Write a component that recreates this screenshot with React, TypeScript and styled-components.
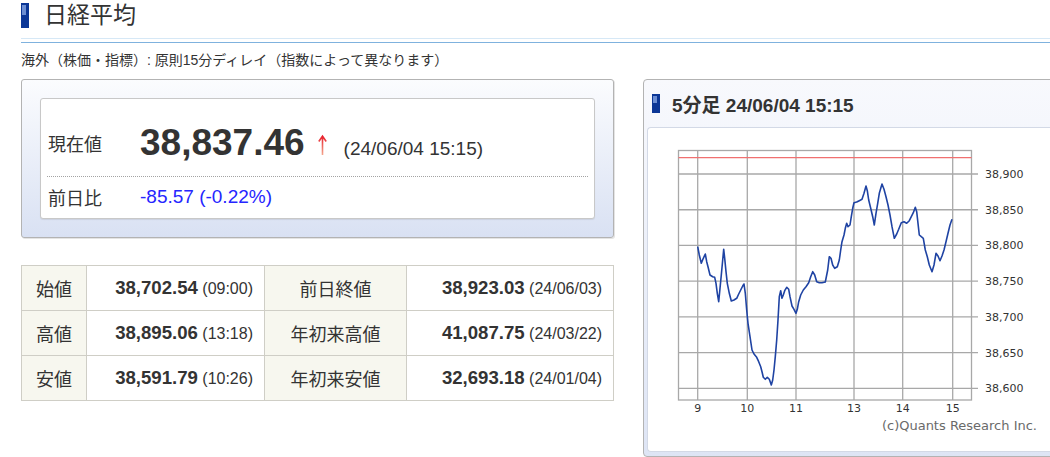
import styled, { createGlobalStyle } from "styled-components";

const GlobalStyle = createGlobalStyle`
  html, body { margin: 0; padding: 0; background: #fff; overflow: hidden; }
  body {
    font-family: "Liberation Sans", "Noto Sans CJK JP", sans-serif;
    color: #333;
  }
`;

const Page = styled.div`
  width: 1050px;
  height: 457px;
  overflow: hidden;
  box-sizing: border-box;
  padding: 3px 0 0 21px;
`;

const TitleRow = styled.div`
  display: flex;
  align-items: center;
  gap: 15px;
  height: 25px;
`;

// blue square marker with the small highlight in its upper-left corner
const Marker = styled.span<{ $h: number; $hl: number }>`
  flex-shrink: 0;
  width: 8px;
  height: ${(p) => p.$h}px;
  background: linear-gradient(#6c8ed3, #6c8ed3) 1px 2px / 4px ${(p) => p.$hl}px no-repeat,
    #0b3696;
`;

const Title = styled.h1`
  margin: 0;
  font-size: 23px;
  font-weight: normal;
  line-height: 25px;
  color: #333;
`;

const Rule = styled.div`
  margin-top: 10px;
  height: 5px;
  box-sizing: border-box;
  border-top: 1px solid #d6e8f6;
  border-bottom: 1px solid #7fb2de;
`;

const Note = styled.p`
  margin: 8px 0 0;
  font-size: 14px;
  line-height: 18px;
  color: #333;
`;

const Main = styled.div`
  display: flex;
  align-items: flex-start;
  gap: 29px;
  margin-top: 10px;
`;

const LeftCol = styled.div`
  flex-shrink: 0;
  width: 593px;
  display: flex;
  flex-direction: column;
  gap: 27px;
`;

const QuoteBox = styled.div`
  height: 159px;
  box-sizing: border-box;
  padding: 18px;
  border: 1px solid #b3b3b3;
  border-radius: 3px;
  background: linear-gradient(#fbfcfe, #d9e1f3);
  box-shadow: 1px 1px 0 #e4e4e4;
`;

const QuoteInner = styled.div`
  height: 100%;
  box-sizing: border-box;
  padding: 0 6px;
  background: #fff;
  border: 1px solid #c8c8c8;
  border-radius: 3px;
  box-shadow: 0 1px 1px rgba(0, 0, 0, 0.08);
`;

const QuoteRow = styled.div<{ $main?: boolean }>`
  display: flex;
  align-items: center;
  box-sizing: border-box;
  height: ${(p) => (p.$main ? 78 : 41)}px;
  padding-top: ${(p) => (p.$main ? 10 : 0)}px;
  padding-bottom: ${(p) => (p.$main ? 0 : 2)}px;
  border-bottom: ${(p) => (p.$main ? "1px dotted #a3a3a3" : "none")};
`;

const RowLabel = styled.span`
  flex-shrink: 0;
  width: 92px;
  padding-left: 1px;
  font-size: 18px;
  color: #333;
`;

const PriceGroup = styled.div`
  display: flex;
  align-items: baseline;
`;

const BigPrice = styled.span`
  font-size: 37px;
  font-weight: bold;
  line-height: 1;
  color: #333;
`;

const Arrow = styled.svg`
  margin: 0 16px -4px 12px;
`;

const Stamp = styled.span`
  font-size: 19px;
  color: #333;
`;

const Change = styled.span`
  font-size: 19px;
  color: #2525ff;
`;

const Stats = styled.table`
  width: 593px;
  border-collapse: collapse;
  table-layout: fixed;
`;

const Col = styled.col<{ $w: number }>`
  width: ${(p) => p.$w}px;
`;

const LabelCell = styled.th`
  height: 44px;
  padding: 0;
  border: 1px solid #cfcec6;
  background: #f7f7ef;
  font-size: 18px;
  font-weight: normal;
  text-align: center;
  color: #333;
`;

const ValueCell = styled.td`
  height: 44px;
  padding: 0 11px 0 0;
  border: 1px solid #cfcec6;
  text-align: right;
  white-space: nowrap;
`;

const Num = styled.b`
  font-size: 18.6px;
  color: #333;
`;

const Time = styled.span`
  font-size: 16px;
  color: #333;
`;

const ChartPanel = styled.section`
  flex-shrink: 0;
  width: 420px;
  height: 378px;
  box-sizing: border-box;
  padding: 0 0 4px 3px;
  border: 1px solid #b3b3b3;
  border-radius: 4px;
  background: linear-gradient(#f8f9fd, #dee5f5);
`;

const ChartHead = styled.div`
  display: flex;
  align-items: center;
  gap: 12px;
  height: 47px;
  padding-left: 5px;
  font-size: 19px;
  font-weight: bold;
  color: #333;
`;

const ChartBody = styled.div`
  height: 325px;
  box-sizing: border-box;
  background: #fff;
  border: 1px solid #d3d9e6;
  border-right: none;
  border-radius: 4px 0 0 4px;
  overflow: hidden;
`;

const Plot = styled.svg`
  display: block;
`;

const stats = [
  ["始値", "38,702.54", "(09:00)", "前日終値", "38,923.03", "(24/06/03)"],
  ["高値", "38,895.06", "(13:18)", "年初来高値", "41,087.75", "(24/03/22)"],
  ["安値", "38,591.79", "(10:26)", "年初来安値", "32,693.18", "(24/01/04)"],
];

// plot geometry, in page pixels (the svg's viewBox starts at the body's corner)
const FRAME = { l: 678.5, r: 971.5, t: 150.5, b: 400 };
const yOf = (v: number) => 174 + (38900 - v) * 0.7145;
const hours = [
  { x: 697.7, t: "9" },
  { x: 747.3, t: "10" },
  { x: 796, t: "11" },
  { x: 854, t: "13" },
  { x: 902.7, t: "14" },
  { x: 952.7, t: "15" },
];
const levels = [38900, 38850, 38800, 38750, 38700, 38650, 38600];

const series: [number, number][] = [
  [697.7, 246.7], [699.3, 255], [701.3, 263.3], [703.3, 258.3], [705.3, 254], [706.7, 261.7],
  [708, 266.7], [710, 275], [712.7, 276.7], [714.7, 277.3], [716, 283.3], [717.3, 293.3],
  [718.7, 301.7], [720, 288.3], [721.3, 275], [722.7, 260], [723.7, 249.3], [724.7, 258.3],
  [726, 271.7], [727.3, 283.3], [729.3, 293.3], [731.3, 301], [734, 300], [736.7, 298.3],
  [738.7, 294], [740.7, 290], [742.7, 286], [744, 284], [745.3, 293.3], [746.7, 310],
  [748, 323.3], [750, 336.7], [752, 350], [754, 354], [756.7, 357.3], [758.7, 361.7],
  [760.7, 366.7], [762, 371.7], [763.3, 377.3], [765.3, 379.3], [767.3, 377.3], [769.3, 379.3],
  [771.3, 385], [772.7, 380], [774, 370], [775.3, 356.7], [776.7, 340], [778, 320],
  [779.3, 296.7], [780.7, 290.7], [782, 298.3], [783.3, 295], [784.7, 290.7], [786.7, 287.3],
  [788.7, 289.3], [790, 296.7], [792, 306], [794, 309.3], [796, 313.3], [797.3, 309.3],
  [798.7, 301.7], [800.7, 295], [803.3, 290], [806, 286.7], [808.7, 282.7], [810.7, 276.7],
  [812.7, 271.7], [814.7, 275], [816.7, 281.7], [819.3, 282.7], [822, 282.7], [825.3, 282],
  [827.7, 270], [829.3, 256.7], [831, 258.3], [832.7, 265], [834.7, 268.3], [837.3, 266.7],
  [839.3, 260], [840.7, 250], [842, 241.7], [844, 235], [845.3, 228.3], [846.7, 223.3],
  [848, 226.7], [850, 225], [851.3, 216.7], [852.7, 208.3], [854, 202.7], [856.7, 202],
  [859.3, 200.7], [862, 199.3], [864, 193.3], [866, 186], [867.3, 190.7], [868.7, 200],
  [870.7, 208.3], [872.7, 216.7], [874.3, 225], [876, 213.3], [877.7, 203.3], [879.3, 193.3],
  [882, 184], [884, 189.3], [886, 196.7], [888, 205], [890, 215], [892, 226.7],
  [894.3, 238.3], [896.7, 234], [898.7, 229.3], [901.3, 222.7], [904, 221.7], [906.7, 223.3],
  [909.3, 220.7], [911.3, 216.7], [913.3, 212.7], [915.3, 207.3], [916.7, 211.7], [918, 223.3],
  [919.3, 235], [921.3, 236.7], [923.3, 238.3], [925.3, 250], [927.3, 256.7], [929.3, 265],
  [932, 271.7], [934, 265], [936, 253.3], [938, 256], [940, 260.7], [942, 256],
  [944, 250], [946, 241.7], [948, 233.3], [950, 225], [952, 219.3],
];

function IntradayChart() {
  const grid = "#a8a8a8";
  const prevClose = yOf(38923.03);
  return (
    <Plot width={400} height={323} viewBox="648 128 400 323">
      {levels.map((v) => (
        <g key={v}>
          <line x1={FRAME.l} x2={978} y1={yOf(v)} y2={yOf(v)} stroke={grid} strokeWidth={1.3} />
          <text x={985} y={yOf(v) + 4} fontSize={11} fontFamily="DejaVu Sans, sans-serif" fill="#333">
            {v.toLocaleString("en-US")}
          </text>
        </g>
      ))}
      {hours.map((h) => (
        <g key={h.t}>
          <line x1={h.x} x2={h.x} y1={FRAME.t} y2={FRAME.b} stroke={grid} strokeWidth={1.3} />
          <text x={h.x} y={411.5} textAnchor="middle" fontSize={11} fontFamily="DejaVu Sans, sans-serif" fill="#333">
            {h.t}
          </text>
        </g>
      ))}
      <rect
        x={FRAME.l}
        y={FRAME.t}
        width={FRAME.r - FRAME.l}
        height={FRAME.b - FRAME.t}
        fill="none"
        stroke={grid}
        strokeWidth={1.3}
      />
      <line x1={FRAME.l} x2={FRAME.r} y1={prevClose} y2={prevClose} stroke="#f07070" strokeWidth={1.3} />
      <polyline
        points={series.map(([x, y]) => `${x},${y}`).join(" ")}
        fill="none"
        stroke="#1f43a3"
        strokeWidth={1.6}
        strokeLinejoin="round"
      />
      <text x={1037} y={430} textAnchor="end" fontSize={13} fontFamily="DejaVu Sans, sans-serif" fill="#6a6a6a">
        (c)Quants Research Inc.
      </text>
    </Plot>
  );
}

export default function App() {
  return (
    <Page>
      <GlobalStyle />
      <TitleRow>
        <Marker $h={25} $hl={10} />
        <Title>日経平均</Title>
      </TitleRow>
      <Rule />
      <Note>海外（株価・指標）: 原則15分ディレイ（指数によって異なります）</Note>
      <Main>
        <LeftCol>
          <QuoteBox>
            <QuoteInner>
              <QuoteRow $main>
                <RowLabel>現在値</RowLabel>
                <PriceGroup>
                  <BigPrice>38,837.46</BigPrice>
                  <Arrow width={11} height={21} viewBox="0 0 11 21">
                    <defs>
                      <linearGradient id="up" x1="0" y1="0" x2="0" y2="1">
                        <stop offset="0" stopColor="#e8202c" />
                        <stop offset="1" stopColor="#f4a88e" />
                      </linearGradient>
                    </defs>
                    <path d="M5.5 2.5V21M1.8 7.5L5.5 2.2L9.2 7.5" fill="none" stroke="url(#up)" strokeWidth={1.6} />
                  </Arrow>
                  <Stamp>(24/06/04 15:15)</Stamp>
                </PriceGroup>
              </QuoteRow>
              <QuoteRow>
                <RowLabel>前日比</RowLabel>
                <Change>-85.57 (-0.22%)</Change>
              </QuoteRow>
            </QuoteInner>
          </QuoteBox>
          <Stats>
            <colgroup>
              <Col $w={65} />
              <Col $w={178} />
              <Col $w={142} />
              <Col $w={207} />
            </colgroup>
            <tbody>
              {stats.map(([l1, n1, t1, l2, n2, t2]) => (
                <tr key={l1}>
                  <LabelCell>{l1}</LabelCell>
                  <ValueCell>
                    <Num>{n1}</Num> <Time>{t1}</Time>
                  </ValueCell>
                  <LabelCell>{l2}</LabelCell>
                  <ValueCell>
                    <Num>{n2}</Num> <Time>{t2}</Time>
                  </ValueCell>
                </tr>
              ))}
            </tbody>
          </Stats>
        </LeftCol>
        <ChartPanel>
          <ChartHead>
            <Marker $h={19} $hl={7} />
            <span>5分足 24/06/04 15:15</span>
          </ChartHead>
          <ChartBody>
            <IntradayChart />
          </ChartBody>
        </ChartPanel>
      </Main>
    </Page>
  );
}
